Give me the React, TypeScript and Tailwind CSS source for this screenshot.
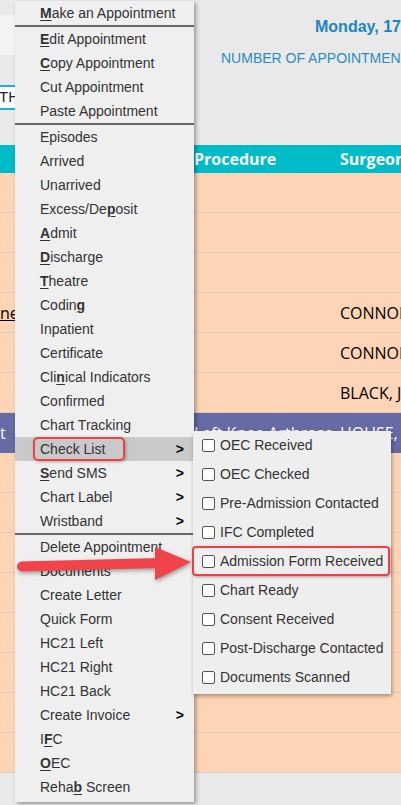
const menuItems: (string | null)[] = [
  "&Make an Appointment",
  null,
  "&Edit Appointment",
  "&Copy Appointment",
  "Cut Appointment",
  "Paste Appointment",
  null,
  "Episodes",
  "Arrived",
  "Unarrived",
  "Excess/De&posit",
  "&Admit",
  "&Discharge",
  "&Theatre",
  "Codin&g",
  "Inpatient",
  "Certificate",
  "Cli&nical Indicators",
  "Confirmed",
  "Chart Tracking",
  "Check List>",
  "&Send SMS>",
  "Chart Label>",
  "Wristband>",
  null,
  "Delete Appointment",
  "Documents",
  "Create Letter",
  "Quick Form",
  "HC21 Left",
  "HC21 Right",
  "HC21 Back",
  "Create Invoice>",
  "I&FC",
  "&OEC",
  "Reha&b Screen",
];

const checkItems = [
  "OEC Received",
  "OEC Checked",
  "Pre-Admission Contacted",
  "IFC Completed",
  "Admission Form Received",
  "Chart Ready",
  "Consent Received",
  "Post-Discharge Contacted",
  "Documents Scanned",
];

function Label({ text }: { text: string }) {
  const i = text.indexOf("&");
  if (i < 0) return <span>{text}</span>;
  return (
    <span>
      {text.slice(0, i)}
      <span className="font-bold underline underline-offset-2">{text[i + 1]}</span>
      {text.slice(i + 2)}
    </span>
  );
}

function ContextMenu() {
  return (
    <div className="absolute left-[15px] top-[1px] w-[179px] bg-[#efefef] pb-[3px] shadow-[2px_2px_4px_rgba(0,0,0,0.35)]">
      {menuItems.map((item, idx) => {
        if (item === null) return <div key={idx} className="h-[2px] bg-[#666]" />;
        const sub = item.endsWith(">");
        const text = sub ? item.slice(0, -1) : item;
        const active = text === "Check List";
        return (
          <div
            key={idx}
            className={`flex h-[24px] items-center justify-between pl-[25px] pr-[10px] ${active ? "bg-[#c9c9c9]" : ""}`}
          >
            <Label text={text} />
            {sub && <span className="font-bold text-black">&gt;</span>}
          </div>
        );
      })}
    </div>
  );
}

function CheckMenu() {
  return (
    <div className="absolute left-[193px] top-[431px] w-[198px] bg-[#eeeeee] pb-[2px] shadow-[1px_2px_4px_rgba(0,0,0,0.35)]">
      {checkItems.map((c) => (
        <div key={c} className="flex h-[29px] items-center gap-[5px] pl-[9px]">
          <span className="h-[13px] w-[13px] rounded-[2px] border border-[#555] bg-white" />
          <span>{c}</span>
        </div>
      ))}
    </div>
  );
}

type Row = { a?: string; b?: string; c?: string; purple?: boolean };

const rows: Row[] = [
  {},
  {},
  {},
  { a: "ne", c: "CONNOR" },
  { c: "CONNOR" },
  { c: "BLACK, J" },
  { a: "t", b: "Left Knee Arthrosc", c: "HOUSE,", purple: true },
  {},
  {},
  {},
  {},
  {},
  {},
  {},
  {},
];

export default function App() {
  return (
    <div className="relative h-[805px] w-[401px] overflow-hidden bg-[#e9e9e9] font-['Liberation_Sans',Arial,sans-serif] text-[14px] text-[#333]">
      <div className="flex h-[145px]">
        <div className="flex w-[194px] shrink-0 flex-col">
          <div className="h-[15px]" />
          <div className="h-[40px] bg-[#f4f4f4]" />
          <div className="h-[30px]" />
          <div className="-ml-[3px] flex h-[25px] items-center border-2 border-[#1bb3d1] bg-white text-[15px] text-[#222]">
            THE
          </div>
        </div>
        <div className="flex min-w-0 flex-1 flex-col overflow-hidden">
          <div className="pl-[121px] pt-[15px] text-[16px] font-bold whitespace-nowrap text-[#1b86c1]">
            Monday, 17 February
          </div>
          <div className="pl-[27px] pt-[9px] whitespace-nowrap text-[#2a8cc4]">NUMBER OF APPOINTMENTS</div>
        </div>
      </div>

      <div className="grid h-[28px] grid-cols-[194px_146px_1fr] items-center overflow-hidden bg-[#00bbc8] font-['Open_Sans',sans-serif] text-[16px] font-bold whitespace-nowrap text-white">
        <div />
        <div>Procedure</div>
        <div>Surgeon</div>
      </div>

      {rows.map((r, i) => (
        <div
          key={i}
          className={`grid h-[40px] grid-cols-[194px_146px_1fr] items-center overflow-hidden border-b font-['Open_Sans',sans-serif] text-[16px] whitespace-nowrap ${
            r.purple ? "border-[#676ba5] bg-[#676ba5] text-white" : "border-[#dcccc0] bg-[#fdd5b6] text-black"
          }`}
        >
          <div className={r.a === "ne" ? "underline" : ""}>{r.a}</div>
          <div>{r.b}</div>
          <div>{r.c}</div>
        </div>
      ))}

      <ContextMenu />
      <CheckMenu />

      <div className="absolute left-[33px] top-[437px] h-[24px] w-[92px] rounded-[5px] border-2 border-[#ee4046] shadow-[1px_1px_3px_rgba(0,0,0,0.3)]" />
      <div className="absolute left-[192px] top-[546px] h-[30px] w-[198px] rounded-[4px] border-2 border-[#ee4046] shadow-[1px_1px_3px_rgba(0,0,0,0.3)]" />

      <svg
        className="absolute left-0 top-[540px] drop-shadow-[1px_2px_2px_rgba(0,0,0,0.35)]"
        width="200"
        height="50"
        viewBox="0 540 200 50"
      >
        <line x1="22" y1="566.5" x2="160" y2="563" stroke="#f0434a" strokeWidth="10" strokeLinecap="round" />
        <polygon points="155,547 191,562 155,580" fill="#f0434a" />
      </svg>
    </div>
  );
}
